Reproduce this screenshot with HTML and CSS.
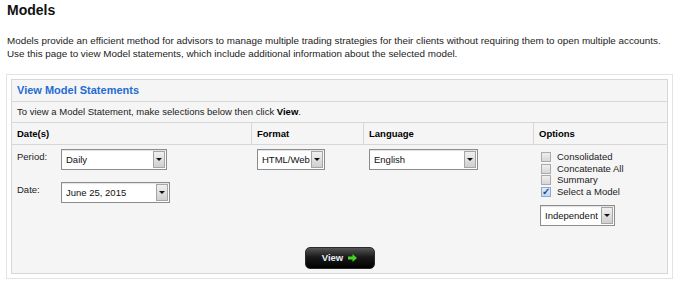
FILE: index.html
```html
<!DOCTYPE html>
<html lang="en">
<head>
  <meta charset="UTF-8">
  <title>Models</title>
  <link rel="stylesheet" href="styles.css">
</head>
<body>
  <h1>Models</h1>
  <p class="intro">Models provide an efficient method for advisors to manage multiple trading strategies for their clients without requiring them to open multiple accounts.<br>Use this page to view Model statements, which include additional information about the selected model.</p>

  <div class="frame">
    <form class="panel">
      <div class="panel-title">View Model Statements</div>
      <div class="panel-note">To view a Model Statement, make selections below then click <b>View</b>.</div>

      <div class="cols">
        <div class="col-head">Date(s)</div>
        <div class="col-head">Format</div>
        <div class="col-head">Language</div>
        <div class="col-head last">Options</div>

        <div class="cell dates">
          <label class="field-label" for="period">Period:</label>
          <div class="select w-period"><select id="period"><option>Daily</option><option>Monthly</option></select></div>
          <label class="field-label" for="date">Date:</label>
          <div class="select w-date"><select id="date"><option>June 25, 2015</option></select></div>
        </div>

        <div class="cell">
          <div class="select w-format"><select><option>HTML/Web</option><option>PDF</option></select></div>
        </div>

        <div class="cell">
          <div class="select w-lang"><select><option>English</option></select></div>
        </div>

        <div class="cell options">
          <div class="checks">
            <label class="check"><input type="checkbox"> Consolidated</label>
            <label class="check"><input type="checkbox"> Concatenate All</label>
            <label class="check"><input type="checkbox"> Summary</label>
            <label class="check"><input type="checkbox" checked> Select a Model</label>
          </div>
          <div class="select w-model"><select><option>Independent</option></select></div>
        </div>
      </div>

      <div class="actions">
        <button type="submit" class="view-btn">View
          <svg width="9" height="8" viewBox="0 0 9 8"><path d="M0 2.5h4.5V0L9 4 4.5 8V5.5H0z" fill="#44d426"/></svg>
        </button>
      </div>
    </form>
  </div>
</body>
</html>
```

FILE: styles.css
```css
body {
  margin: 0;
  padding: 0 6px;
  font-family: "Liberation Sans", Arial, sans-serif;
  font-size: 9.5px;
  color: #222;
  background: #fff;
}
h1 {
  font-size: 14px;
  line-height: 16px;
  margin: 2px 0 0 1px;
  color: #111;
}
.intro {
  margin: 16px 0 14px 1px;
  font-size: 9.85px;
  line-height: 13px;
}
.frame {
  width: 667px;
  box-sizing: border-box;
  border: 1px solid #e3e3e3;
  padding: 4px;
}
.panel {
  margin: 0;
  border: 1px solid #d7d7d7;
  background: #f5f5f5;
}
.panel-title {
  line-height: 21px;
  padding: 0 5px;
  font-size: 11px;
  font-weight: bold;
  color: #1f6cd3;
  border-bottom: 1px solid #d7d7d7;
}
.panel-note {
  line-height: 20px;
  padding: 0 5px;
  border-bottom: 1px solid #d7d7d7;
}
.panel-note b {
  color: #000;
}
.cols {
  display: grid;
  grid-template-columns: 240px 112px 170px 1fr;
}
.col-head {
  line-height: 21px;
  padding: 0 5px;
  font-weight: bold;
  color: #000;
  border-bottom: 1px solid #d7d7d7;
  border-right: 1px solid #d7d7d7;
}
.col-head.last {
  border-right: 0;
}
.cell {
  padding: 4px 5px 5px;
}
.dates {
  display: grid;
  grid-template-columns: 44px auto;
  row-gap: 12px;
  align-items: start;
  align-content: start;
}
.field-label {
  margin-top: 1px;
  line-height: 13px;
}

/* select box with the little grey arrow button */
.select {
  position: relative;
  height: 21px;
}
.select select {
  appearance: none;
  -webkit-appearance: none;
  width: 100%;
  height: 100%;
  margin: 0;
  padding: 0 2px 0 4px;
  border: 1px solid #8c8c8c;
  border-radius: 0;
  background: #fff;
  box-shadow: inset 0 1px 1px rgba(0,0,0,0.12);
  font-family: inherit;
  font-size: 9.5px;
  color: #111;
}
.select::after {
  content: "";
  position: absolute;
  top: 2px;
  right: 2px;
  bottom: 2px;
  width: 10px;
  border: 1px solid #a5a5a5;
  background: linear-gradient(#f0f0f0, #cfcfcf);
  pointer-events: none;
}
.select::before {
  content: "";
  position: absolute;
  z-index: 1;
  top: 9px;
  right: 5px;
  border-left: 3px solid transparent;
  border-right: 3px solid transparent;
  border-top: 3px solid #111;
  pointer-events: none;
}
.w-period { width: 106px; }
.w-date { width: 109px; }
.w-format { width: 68px; }
.w-lang { width: 109px; }
.w-model { width: 75px; margin-top: 7px; }

.options {
  padding-left: 6px;
}
.checks {
  margin-top: 2px;
}
.check {
  display: flex;
  align-items: center;
  height: 11.7px;
  line-height: 11.7px;
}
.check input {
  appearance: none;
  -webkit-appearance: none;
  position: relative;
  width: 10px;
  height: 10px;
  margin: 0 6px 0 1px;
  border: 1px solid #ababab;
  background: linear-gradient(#efefef, #d6d6d6);
}
.check input:checked {
  border-color: #8fa9cc;
  background: linear-gradient(#e2ecf8, #c3d6ee);
}
.check input:checked::after {
  content: "\2713";
  position: absolute;
  left: 0;
  top: -2px;
  font-size: 10px;
  font-weight: bold;
  color: #1b4d9a;
}

.actions {
  display: flex;
  justify-content: center;
  padding: 16px 0 4px;
}
.view-btn {
  display: flex;
  align-items: center;
  justify-content: center;
  gap: 5px;
  width: 70px;
  height: 22px;
  padding: 0;
  border: 1px solid #2a2a2a;
  border-radius: 5px;
  background: linear-gradient(#555 0%, #1a1a1a 45%, #000 100%);
  color: #e8eef6;
  font-family: inherit;
  font-size: 9.5px;
  font-weight: bold;
  cursor: pointer;
}
```
